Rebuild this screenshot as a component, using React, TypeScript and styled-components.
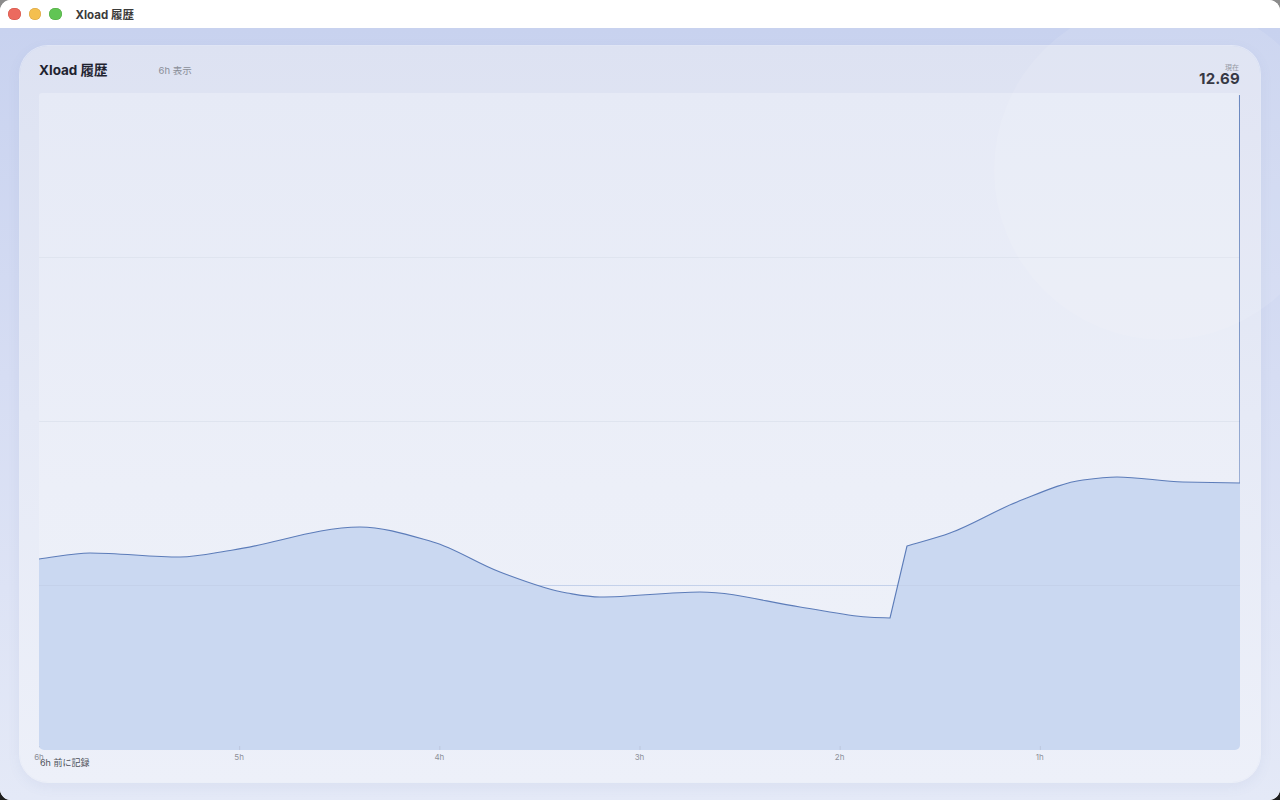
import React from "react";
import styled, { createGlobalStyle } from "styled-components";

const Global = createGlobalStyle`
  html, body { margin: 0; padding: 0; width: 1280px; height: 800px; overflow: hidden; }
  body {
    background: linear-gradient(180deg, #8c8c8c 0%, #5a5a5a 50%, #1e1e1e 100%);
    font-family: Inter, "Noto Sans", "Noto Sans CJK JP", sans-serif;
    -webkit-font-smoothing: antialiased;
  }
`;

const Window = styled.div`
  width: 1280px;
  height: 800px;
  border-radius: 11px;
  overflow: hidden;
  display: flex;
  flex-direction: column;
  background: #fff;
`;

const TitleBar = styled.div`
  height: 28px;
  flex: 0 0 28px;
  display: flex;
  align-items: center;
  padding-left: 8px;
  background: #ffffff;
  box-sizing: border-box;
`;

const Light = styled.span<{ $c: string; $b: string }>`
  width: 12.5px;
  height: 12.5px;
  border-radius: 50%;
  background: ${(p) => p.$c};
  box-shadow: inset 0 0 0 0.5px ${(p) => p.$b};
  margin-right: 8px;
`;

const WinTitle = styled.span`
  margin-left: 6px;
  font-size: 11.5px;
  font-weight: 700;
  color: #3b3b3b;
`;

const Content = styled.div`
  position: relative;
  flex: 1;
  padding: 18px 20px 18px 20px;
  box-sizing: border-box;
  background: linear-gradient(180deg, #c8d2ef 0%, #d6ddf3 45%, #e4e9f7 100%);
  display: flex;
  overflow: hidden;
`;

const Glow = styled.div`
  position: absolute;
  left: 994px;
  top: -28px;
  width: 340px;
  height: 340px;
  border-radius: 50%;
  background: rgba(255, 255, 255, 0.1);
  pointer-events: none;
`;

const Card = styled.div`
  flex: 1;
  border-radius: 28px;
  background: linear-gradient(180deg, #dde2f2 0%, #e6eaf6 50%, #edf0f9 100%);
  box-shadow: 0 0 0 1px rgba(255, 255, 255, 0.45), 0 4px 14px rgba(90, 110, 170, 0.08);
  padding: 16px 20px 0 19px;
  box-sizing: border-box;
  display: flex;
  flex-direction: column;
`;

const Header = styled.div`
  height: 31px;
  flex: 0 0 31px;
  display: flex;
  align-items: flex-start;
  justify-content: space-between;
`;

const HeaderLeft = styled.div`
  display: flex;
  align-items: center;
  height: 17px;
`;

const Title = styled.span`
  font-size: 13.5px;
  font-weight: 700;
  color: #1f2330;
  line-height: 17px;
`;

const Range = styled.span`
  margin-left: 51px;
  font-size: 9.5px;
  color: #8a8e98;
  line-height: 17px;
`;

const Current = styled.div`
  display: flex;
  flex-direction: column;
  align-items: flex-end;
  padding-top: 2px;
`;

const CurrentLabel = styled.span`
  font-size: 7px;
  line-height: 8px;
  color: #8a8e98;
  margin-right: 1px;
`;

const CurrentValue = styled.span`
  font-size: 15px;
  line-height: 14px;
  font-weight: 700;
  color: #1f2330;
  letter-spacing: 0.2px;
`;

const Plot = styled.div`
  position: relative;
  height: 657px;
  flex: 0 0 657px;
  border-radius: 3px 3px 5px 5px;
  overflow: hidden;
  background: linear-gradient(180deg, #e6eaf6 0%, #eceff8 60%, #eef1f9 100%);
`;

const ChartSvg = styled.svg`
  display: block;
  width: 100%;
  height: 100%;
`;

const Footer = styled.div`
  padding-top: 2px;
  display: flex;
  flex-direction: column;
`;

const Axis = styled.div`
  display: grid;
  grid-template-columns: repeat(6, 1fr);
  height: 10px;
  font-size: 8px;
  line-height: 10px;
`;

const AxisCell = styled.div`
  display: flex;
  height: 10px;
`;

const Tick = styled.span`
  display: block;
  transform: translateX(-50%);
  font-size: 8px;
  line-height: 10px;
  color: #8d9099;
`;

const Note = styled.div`
  margin-top: -5px;
  margin-left: 1px;
  font-size: 9px;
  line-height: 11px;
  color: #4d515a;
`;

const W = 1201;
const H = 657;

const segA: [number, number][] = [
  [0, 466], [51, 460], [141, 464], [194, 457], [321, 434], [394, 449],
  [461, 479], [528, 500], [561, 504], [661, 499], [761, 514], [828, 524], [851, 525],
];
const segB: [number, number][] = [
  [868, 453], [911, 440], [978, 409], [1044, 387], [1078, 384], [1144, 389], [1201, 390],
];

function monotone(pts: [number, number][]): string {
  const n = pts.length;
  const dx: number[] = [];
  const s: number[] = [];
  for (let i = 0; i < n - 1; i++) {
    dx.push(pts[i + 1][0] - pts[i][0]);
    s.push((pts[i + 1][1] - pts[i][1]) / dx[i]);
  }
  const m: number[] = new Array(n).fill(0);
  m[0] = s[0];
  m[n - 1] = s[n - 2];
  for (let i = 1; i < n - 1; i++) {
    if (s[i - 1] * s[i] <= 0) m[i] = 0;
    else {
      const w1 = 2 * dx[i] + dx[i - 1];
      const w2 = dx[i] + 2 * dx[i - 1];
      m[i] = (w1 + w2) / (w1 / s[i - 1] + w2 / s[i]);
    }
  }
  let d = "";
  for (let i = 0; i < n - 1; i++) {
    const h = dx[i] / 3;
    const c1x = pts[i][0] + h;
    const c1y = pts[i][1] + m[i] * h;
    const c2x = pts[i + 1][0] - h;
    const c2y = pts[i + 1][1] - m[i + 1] * h;
    d += ` C ${c1x.toFixed(1)} ${c1y.toFixed(1)} ${c2x.toFixed(1)} ${c2y.toFixed(1)} ${pts[i + 1][0]} ${pts[i + 1][1]}`;
  }
  return d;
}

const lineD =
  `M ${segA[0][0]} ${segA[0][1]}` + monotone(segA) + ` L ${segB[0][0]} ${segB[0][1]}` + monotone(segB);
const fillD = lineD + ` L ${W} ${H} L 0 ${H} Z`;
const strokeD = lineD + ` L ${W - 0.5} 2`;

const ticks = ["6h", "5h", "4h", "3h", "2h", "1h"];

export default function App() {
  return (
    <>
      <Global />
      <Window>
        <TitleBar>
          <Light $c="#ec6a5e" $b="#d05548" />
          <Light $c="#f4bf4f" $b="#d6a243" />
          <Light $c="#61c554" $b="#52a842" />
          <WinTitle>Xload 履歴</WinTitle>
        </TitleBar>
        <Content>
          <Card>
            <Header>
              <HeaderLeft>
                <Title>Xload 履歴</Title>
                <Range>6h 表示</Range>
              </HeaderLeft>
              <Current>
                <CurrentLabel>現在</CurrentLabel>
                <CurrentValue>12.69</CurrentValue>
              </Current>
            </Header>
            <Plot>
              <ChartSvg viewBox={`0 0 ${W} ${H}`} preserveAspectRatio="none">
                {[164, 328, 492].map((y) => (
                  <line key={y} x1={0} x2={W} y1={y + 0.5} y2={y + 0.5} stroke="#dfe4ef" strokeWidth={1} />
                ))}
                <path d={fillD} fill="#cad8f1" />
                <line x1={0} x2={W} y1={492.5} y2={492.5} stroke="#c4d1ea" strokeWidth={1} />
                {ticks.map((t, i) => (
                  <line key={t} x1={(W / 6) * i + 0.5} x2={(W / 6) * i + 0.5} y1={H - 4} y2={H} stroke="#bcc7de" strokeWidth={1} />
                ))}
                <path d={strokeD} fill="none" stroke="#5c7cb9" strokeWidth={1.1} strokeLinejoin="round" />
              </ChartSvg>
            </Plot>
            <Footer>
              <Axis>
                {ticks.map((t) => (
                  <AxisCell key={t}>
                    <Tick>{t}</Tick>
                  </AxisCell>
                ))}
              </Axis>
              <Note>6h 前に記録</Note>
            </Footer>
          </Card>
          <Glow />
        </Content>
      </Window>
    </>
  );
}
